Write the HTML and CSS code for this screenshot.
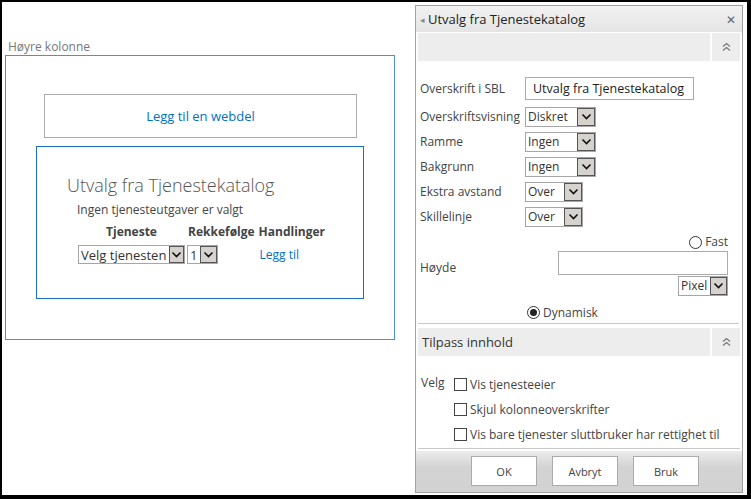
FILE: index.html
```html
<!DOCTYPE html>
<html lang="no">
<head>
    <meta charset="UTF-8">
    <title>Utvalg fra Tjenestekatalog</title>
    <link rel="stylesheet" href="styles.css">
</head>
<body>
<div class="screen">

    <!-- Web part zone -->
    <div class="zone">
        <div class="zone-title">Høyre kolonne</div>
        <div class="zone-box">
            <div class="add-webpart"><a href="#">Legg til en webdel</a></div>

            <div class="webpart">
                <h2>Utvalg fra Tjenestekatalog</h2>
                <p class="empty">Ingen tjenesteutgaver er valgt</p>
                <table class="services">
                    <tr>
                        <th>Tjeneste</th>
                        <th>Rekkefølge</th>
                        <th>Handlinger</th>
                    </tr>
                    <tr>
                        <td>
                            <span class="select svc-select"><span class="val">Velg tjenesten</span><span class="btn-arrow"><svg width="11" height="8" viewBox="0 0 11 8"><polyline points="1.5,1.5 5.5,5.5 9.5,1.5" fill="none" stroke="#111" stroke-width="1.6"/></svg></span></span>
                        </td>
                        <td>
                            <span class="select order-select"><span class="val">1</span><span class="btn-arrow"><svg width="11" height="8" viewBox="0 0 11 8"><polyline points="1.5,1.5 5.5,5.5 9.5,1.5" fill="none" stroke="#111" stroke-width="1.6"/></svg></span></span>
                        </td>
                        <td class="action"><a href="#">Legg til</a></td>
                    </tr>
                </table>
            </div>
        </div>
    </div>

    <!-- Tool pane -->
    <div class="toolpane">
        <div class="pane-header">
            <span class="pane-back">&#9666;</span>
            <span class="pane-title">Utvalg fra Tjenestekatalog</span>
            <span class="pane-close">&#10005;</span>
        </div>

        <div class="section-bar">
            <div class="section-name"></div>
            <div class="section-toggle">
                <svg width="9" height="10" viewBox="0 0 9 10"><polyline points="1,4.5 4.5,1.5 8,4.5" fill="none" stroke="#777" stroke-width="1.2"/><polyline points="1,8.5 4.5,5.5 8,8.5" fill="none" stroke="#777" stroke-width="1.2"/></svg>
            </div>
        </div>

        <div class="pane-body">
            <div class="field first">
                <label>Overskrift i SBL</label>
                <span class="textbox title-box">Utvalg fra Tjenestekatalog</span>
            </div>
            <div class="field">
                <label>Overskriftsvisning</label>
                <span class="select wide"><span class="val">Diskret</span><span class="btn-arrow"><svg width="11" height="8" viewBox="0 0 11 8"><polyline points="1.5,1.5 5.5,5.5 9.5,1.5" fill="none" stroke="#111" stroke-width="1.6"/></svg></span></span>
            </div>
            <div class="field">
                <label>Ramme</label>
                <span class="select wide"><span class="val">Ingen</span><span class="btn-arrow"><svg width="11" height="8" viewBox="0 0 11 8"><polyline points="1.5,1.5 5.5,5.5 9.5,1.5" fill="none" stroke="#111" stroke-width="1.6"/></svg></span></span>
            </div>
            <div class="field">
                <label>Bakgrunn</label>
                <span class="select wide"><span class="val">Ingen</span><span class="btn-arrow"><svg width="11" height="8" viewBox="0 0 11 8"><polyline points="1.5,1.5 5.5,5.5 9.5,1.5" fill="none" stroke="#111" stroke-width="1.6"/></svg></span></span>
            </div>
            <div class="field">
                <label>Ekstra avstand</label>
                <span class="select narrow"><span class="val">Over</span><span class="btn-arrow"><svg width="11" height="8" viewBox="0 0 11 8"><polyline points="1.5,1.5 5.5,5.5 9.5,1.5" fill="none" stroke="#111" stroke-width="1.6"/></svg></span></span>
            </div>
            <div class="field">
                <label>Skillelinje</label>
                <span class="select narrow"><span class="val">Over</span><span class="btn-arrow"><svg width="11" height="8" viewBox="0 0 11 8"><polyline points="1.5,1.5 5.5,5.5 9.5,1.5" fill="none" stroke="#111" stroke-width="1.6"/></svg></span></span>
            </div>

            <div class="height-field">
                <label>Høyde</label>
                <div class="height-inputs">
                    <span class="radio-item"><span class="radio"></span>Fast</span>
                    <span class="textbox height-box"></span>
                    <span class="select unit-select"><span class="val">Pixel</span><span class="btn-arrow"><svg width="11" height="8" viewBox="0 0 11 8"><polyline points="1.5,1.5 5.5,5.5 9.5,1.5" fill="none" stroke="#111" stroke-width="1.6"/></svg></span></span>
                </div>
            </div>
            <div class="dynamic-row">
                <span class="radio-item"><span class="radio checked"></span>Dynamisk</span>
            </div>
        </div>

        <div class="separator"></div>

        <div class="section-bar">
            <div class="section-name">Tilpass innhold</div>
            <div class="section-toggle">
                <svg width="9" height="10" viewBox="0 0 9 10"><polyline points="1,4.5 4.5,1.5 8,4.5" fill="none" stroke="#777" stroke-width="1.2"/><polyline points="1,8.5 4.5,5.5 8,8.5" fill="none" stroke="#777" stroke-width="1.2"/></svg>
            </div>
        </div>

        <div class="choose">
            <div class="choose-label">Velg</div>
            <div class="choose-list">
                <div class="check-row"><span class="checkbox"></span>Vis tjenesteeier</div>
                <div class="check-row"><span class="checkbox"></span>Skjul kolonneoverskrifter</div>
                <div class="check-row"><span class="checkbox"></span>Vis bare tjenester sluttbruker har rettighet til</div>
            </div>
        </div>

        <div class="separator bottom"></div>

        <div class="pane-footer">
            <button class="pane-btn">OK</button>
            <button class="pane-btn">Avbryt</button>
            <button class="pane-btn">Bruk</button>
        </div>
    </div>

</div>
</body>
</html>
```

FILE: styles.css
```css
body {
    margin: 0;
    background: #000;
    font-family: 'Open Sans', 'Noto Sans', sans-serif;
    font-size: 12px;
    color: #444;
}

a {
    color: #0072c6;
    text-decoration: none;
}

/* White page inside the black frame */
.screen {
    display: flex;
    margin: 2px 4px 0 2px;
    height: 493px;
    background: #fff;
    overflow: hidden;
}

/* Web part zone */
.zone {
    width: 411px;
    padding: 37px 0 0 3px;
    box-sizing: border-box;
}

.zone-title {
    color: #777;
    font-size: 12px;
    line-height: 16px;
    padding-left: 3px;
}

.zone-box {
    width: 390px;
    height: 285px;
    border: 1px solid #4a92d2;
    box-sizing: border-box;
    padding: 38px 0 0 30px;
}

.add-webpart {
    width: 313px;
    height: 44px;
    margin-left: 8px;
    border: 1px solid #ababab;
    box-sizing: border-box;
    display: flex;
    align-items: center;
    justify-content: center;
    font-size: 13px;
}

.webpart {
    width: 328px;
    height: 153px;
    margin-top: 8px;
    border: 1px solid #1a6fbf;
    box-sizing: border-box;
    padding: 26px 0 0 30px;
}

.webpart h2 {
    margin: 0;
    font-size: 18px;
    font-weight: 300;
    line-height: 24px;
    color: #555;
}

.webpart .empty {
    margin: 5px 0 0 10px;
    line-height: 16px;
}

.services {
    border-collapse: collapse;
    margin: 3px 0 0 10px;
}

.services th {
    font-weight: bold;
    color: #444;
    line-height: 16px;
    padding: 3px 2px 5px;
    text-align: center;
}

.services td {
    padding: 0 1px;
    vertical-align: middle;
}

.services td.action {
    padding-left: 3px;
}

/* Fake select boxes */
.select {
    display: inline-flex;
    align-items: stretch;
    height: 20px;
    border: 1px solid #a6a6a6;
    box-sizing: border-box;
    background: #fff;
    color: #333;
    line-height: 18px;
}

.select .val {
    flex: 1;
    padding: 0 3px 0 2px;
    white-space: nowrap;
}

.select .btn-arrow {
    width: 16px;
    border: 1px solid #555;
    background: #d6d3cf;
    display: flex;
    align-items: center;
    justify-content: center;
}

.svc-select {
    width: 107px;
    height: 19px;
    font-size: 13px;
}

.order-select {
    width: 31px;
    height: 19px;
    font-size: 13px;
}

.select.wide {
    width: 71px;
}

.select.narrow {
    width: 58px;
}

.unit-select {
    width: 50px;
}

/* Tool pane */
.toolpane {
    width: 328px;
    height: 488px;
    margin: 3px 0 0 2px;
    border: 1px solid #a0a0a0;
    box-sizing: border-box;
    display: flex;
    flex-direction: column;
    color: #444;
}

.pane-header {
    height: 26px;
    display: flex;
    align-items: center;
    padding: 0 6px 0 4px;
    background: linear-gradient(#f2f2f2, #e4e4e4);
    font-size: 13px;
    color: #222;
}

.pane-back {
    font-size: 9px;
    color: #888;
    margin-right: 3px;
}

.pane-title {
    flex: 1;
}

.pane-close {
    font-size: 12px;
    color: #666;
}

.section-bar {
    display: flex;
    height: 28px;
    margin: 1px 2px 0;
}

.section-name {
    flex: 1;
    background: #ededed;
    display: flex;
    align-items: center;
    padding-left: 4px;
    font-size: 13px;
    color: #333;
}

.section-toggle {
    width: 28px;
    margin-left: 2px;
    background: #ededed;
    display: flex;
    align-items: center;
    justify-content: center;
}

.pane-body {
    padding: 13px 14px 0 4px;
}

.field {
    display: flex;
    align-items: center;
    height: 25px;
}

.field.first {
    height: 29px;
    margin-bottom: 1px;
}

.field label {
    width: 105px;
    white-space: nowrap;
}

.textbox {
    display: inline-block;
    border: 1px solid #ababab;
    box-sizing: border-box;
    background: #fff;
    color: #222;
}

.title-box {
    width: 169px;
    height: 23px;
    line-height: 21px;
    padding-left: 7px;
    font-size: 12.5px;
    white-space: nowrap;
    overflow: hidden;
}

.height-field {
    display: flex;
    align-items: center;
    margin-top: 5px;
}

.height-field label {
    flex: 1;
    padding-top: 4px;
}

.height-inputs {
    display: flex;
    flex-direction: column;
    align-items: flex-end;
}

.height-box {
    width: 170px;
    height: 24px;
    margin-top: 1px;
}

.unit-select {
    margin-top: 1px;
}

.radio-item {
    display: inline-flex;
    align-items: center;
    line-height: 16px;
    color: #444;
}

.radio {
    width: 11px;
    height: 11px;
    border: 1px solid #333;
    border-radius: 50%;
    margin-right: 3px;
    display: inline-flex;
    align-items: center;
    justify-content: center;
}

.radio.checked::after {
    content: "";
    width: 7px;
    height: 7px;
    border-radius: 50%;
    background: #222;
}

.dynamic-row {
    padding: 7px 0 0 107px;
    height: 18px;
}

.separator {
    height: 1px;
    background: #c8c8c8;
    margin: 2px 3px 3px 2px;
}

.choose {
    display: flex;
    padding: 17px 0 0 5px;
}

.choose-label {
    width: 33px;
    line-height: 20px;
}

.check-row {
    display: flex;
    align-items: center;
    height: 25px;
    line-height: 16px;
}

.check-row:first-child {
    margin-top: -1px;
}

.checkbox {
    width: 11px;
    height: 11px;
    border: 1px solid #444;
    background: #fff;
    margin-right: 3px;
}

.separator.bottom {
    margin: 1px 2px 2px;
}

.pane-footer {
    flex: 1;
    display: flex;
    gap: 15px;
    padding: 5px 0 0 55px;
    background: linear-gradient(#ececec, #d3d3d3 40%, #d2d2d2);
}

.pane-btn {
    width: 66px;
    height: 30px;
    border: 1px solid #ababab;
    background: #fff;
    font-family: 'Open Sans', 'Noto Sans', sans-serif;
    font-size: 11px;
    color: #444;
}
```
